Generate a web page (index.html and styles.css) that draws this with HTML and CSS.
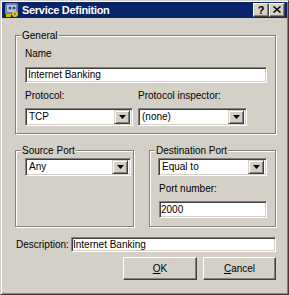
FILE: index.html
```html
<!DOCTYPE html>
<html>
<head>
<meta charset="utf-8">
<link rel="stylesheet" href="styles.css">
</head>
<body>
<div class="window">
  <div class="titlebar">
    <span class="app-icon">
      <svg width="16" height="16" viewBox="0 0 16 16">
        <rect x="1" y="1" width="13" height="12" rx="2" fill="#6f7fb0"/>
        <rect x="3" y="3" width="9" height="7" rx="1" fill="#b8c4e4"/>
        <circle cx="6" cy="6" r="1.5" fill="#3a4a80"/>
        <circle cx="10" cy="6" r="1.5" fill="#3a4a80"/>
        <circle cx="11" cy="12" r="3" fill="#e8c800"/>
        <circle cx="11" cy="12" r="1.2" fill="#6f7fb0"/>
        <rect x="2" y="12" width="5" height="3" fill="#d8b800"/>
      </svg>
    </span>
    <span class="title">Service Definition</span>
    <span class="tb-buttons">
      <span class="tb-btn help">?</span>
      <span class="tb-btn close">
        <svg width="8" height="7" viewBox="0 0 8 7"><path d="M0.5 0.5 L7.5 6.5 M7.5 0.5 L0.5 6.5" stroke="#000" stroke-width="1.5"/></svg>
      </span>
    </span>
  </div>
  <div class="client">
    <div class="group general">
      <span class="legend">General</span>
      <div class="lbl name-lbl">Name</div>
      <div class="edit name-edit">Internet Banking</div>
      <div class="proto-row">
        <div class="col col-proto">
          <div class="lbl">Protocol:</div>
          <div class="combo w108"><span class="combo-text">TCP</span><span class="drop"><svg width="7" height="4" viewBox="0 0 7 4"><path d="M0 0 H7 L3.5 4 Z" fill="#000"/></svg></span></div>
        </div>
        <div class="col col-insp">
          <div class="lbl">Protocol inspector:</div>
          <div class="combo w109"><span class="combo-text">(none)</span><span class="drop"><svg width="7" height="4" viewBox="0 0 7 4"><path d="M0 0 H7 L3.5 4 Z" fill="#000"/></svg></span></div>
        </div>
      </div>
    </div>
    <div class="ports">
      <div class="group source">
        <span class="legend">Source Port</span>
        <div class="combo w106 port-combo"><span class="combo-text">Any</span><span class="drop"><svg width="7" height="4" viewBox="0 0 7 4"><path d="M0 0 H7 L3.5 4 Z" fill="#000"/></svg></span></div>
      </div>
      <div class="group dest">
        <span class="legend">Destination Port</span>
        <div class="combo w109 port-combo"><span class="combo-text">Equal to</span><span class="drop"><svg width="7" height="4" viewBox="0 0 7 4"><path d="M0 0 H7 L3.5 4 Z" fill="#000"/></svg></span></div>
        <div class="lbl portnum-lbl">Port number:</div>
        <div class="edit portnum-edit">2000</div>
      </div>
    </div>
    <div class="desc-row">
      <span class="lbl desc-lbl">Description:</span>
      <div class="edit desc-edit">Internet Banking</div>
    </div>
    <div class="buttons">
      <button class="btn ok"><u>O</u>K</button>
      <button class="btn cancel"><u>C</u>ancel</button>
    </div>
  </div>
</div>
</body>
</html>
```

FILE: styles.css
```css
* { box-sizing: border-box; }
html, body { margin: 0; padding: 0; }
body {
  width: 289px;
  height: 295px;
  overflow: hidden;
  background: #d4d0c8;
  font-family: "Liberation Sans", Arial, sans-serif;
  font-size: 10px;
  line-height: 12px;
  color: #000;
}
.window {
  width: 289px;
  height: 295px;
  background: #d4d0c8;
  border: 1px solid;
  border-color: #d4d0c8 #404040 #404040 #d4d0c8;
  box-shadow: inset 1px 1px #fff, inset -1px -1px #808080;
  padding: 1px;
  display: flex;
  flex-direction: column;
}
.titlebar {
  height: 16px;
  flex: none;
  background: #0a246a;
  color: #fff;
  display: flex;
  align-items: center;
}
.app-icon {
  width: 16px;
  height: 16px;
  margin-left: 2px;
  display: flex;
}
.title {
  margin-left: 2px;
  font-weight: bold;
  font-size: 11px;
  letter-spacing: -0.3px;
  line-height: 13px;
}
.tb-buttons {
  margin-left: auto;
  margin-right: 2px;
  display: flex;
}
.tb-btn {
  width: 16px;
  height: 14px;
  background: #d4d0c8;
  border: 1px solid;
  border-color: #fff #404040 #404040 #fff;
  box-shadow: inset -1px -1px #808080;
  display: flex;
  align-items: center;
  justify-content: center;
  color: #000;
}
.tb-btn.help {
  font-weight: bold;
  font-size: 11px;
  line-height: 12px;
  padding-bottom: 1px;
}
.tb-btn.close { padding-bottom: 1px; }
.client {
  flex: 1;
  display: flex;
  flex-direction: column;
}
.group {
  position: relative;
  border: 1px solid #808080;
  box-shadow: inset 1px 1px #fff, 1px 1px #fff;
}
.legend {
  position: absolute;
  top: -6px;
  left: 5px;
  padding: 0 1px;
  background: #d4d0c8;
  line-height: 12px;
}
.general {
  margin: 17px 0 0 13px;
  width: 261px;
  height: 99px;
  padding: 0 8px 0 9px;
  display: flex;
  flex-direction: column;
}
.lbl { line-height: 12px; white-space: nowrap; }
.name-lbl { margin-top: 12px; }
.edit {
  background: #fff;
  border: 1px solid;
  border-color: #808080 #fff #fff #808080;
  box-shadow: inset 1px 1px #404040, inset -1px -1px #d4d0c8;
  padding: 0 2px;
  display: flex;
  align-items: center;
  white-space: nowrap;
  overflow: hidden;
}
.name-edit {
  margin-top: 7px;
  height: 16px;
  width: 242px;
}
.proto-row {
  margin-top: 7px;
  display: flex;
  gap: 5px;
}
.col { display: flex; flex-direction: column; gap: 6px; }
.combo {
  height: 18px;
  background: #fff;
  border: 1px solid;
  border-color: #808080 #fff #fff #808080;
  box-shadow: inset 1px 1px #404040, inset -1px -1px #d4d0c8;
  padding: 2px;
  display: flex;
  align-items: center;
}
.w106 { width: 106px; }
.w108 { width: 108px; }
.w109 { width: 109px; }
.combo-text {
  flex: 1;
  padding-left: 1px;
  white-space: nowrap;
}
.drop {
  width: 16px;
  height: 14px;
  background: #d4d0c8;
  border: 1px solid;
  border-color: #d4d0c8 #404040 #404040 #d4d0c8;
  box-shadow: inset 1px 1px #fff, inset -1px -1px #808080;
  display: flex;
  align-items: center;
  justify-content: center;
}
.ports {
  margin: 16px 0 0 13px;
  display: flex;
  gap: 15px;
  height: 77px;
}
.source {
  width: 119px;
  padding: 0 0 0 9px;
}
.dest {
  width: 127px;
  padding: 0 0 0 8px;
  display: flex;
  flex-direction: column;
}
.port-combo { margin-top: 7px; }
.portnum-lbl { margin-top: 7px; padding-left: 1px; }
.portnum-edit {
  margin-top: 6px;
  margin-left: 1px;
  width: 108px;
  height: 17px;
  padding-left: 1px;
}
.desc-row {
  margin: 10px 0 0 14px;
  display: flex;
  align-items: center;
  height: 15px;
}
.desc-lbl { width: 55px; }
.desc-edit {
  width: 205px;
  height: 15px;
  padding-left: 1px;
}
.buttons {
  margin: 5px 11px 0 0;
  display: flex;
  justify-content: flex-end;
  gap: 6px;
}
.btn {
  height: 23px;
  background: #d4d0c8;
  border: 1px solid;
  border-color: #fff #404040 #404040 #fff;
  box-shadow: inset -1px -1px #808080;
  font-family: "Liberation Sans", Arial, sans-serif;
  font-size: 10px;
  line-height: 12px;
  color: #000;
  padding: 0;
  margin: 0;
}
.ok { width: 74px; }
.cancel { width: 73px; }
```
